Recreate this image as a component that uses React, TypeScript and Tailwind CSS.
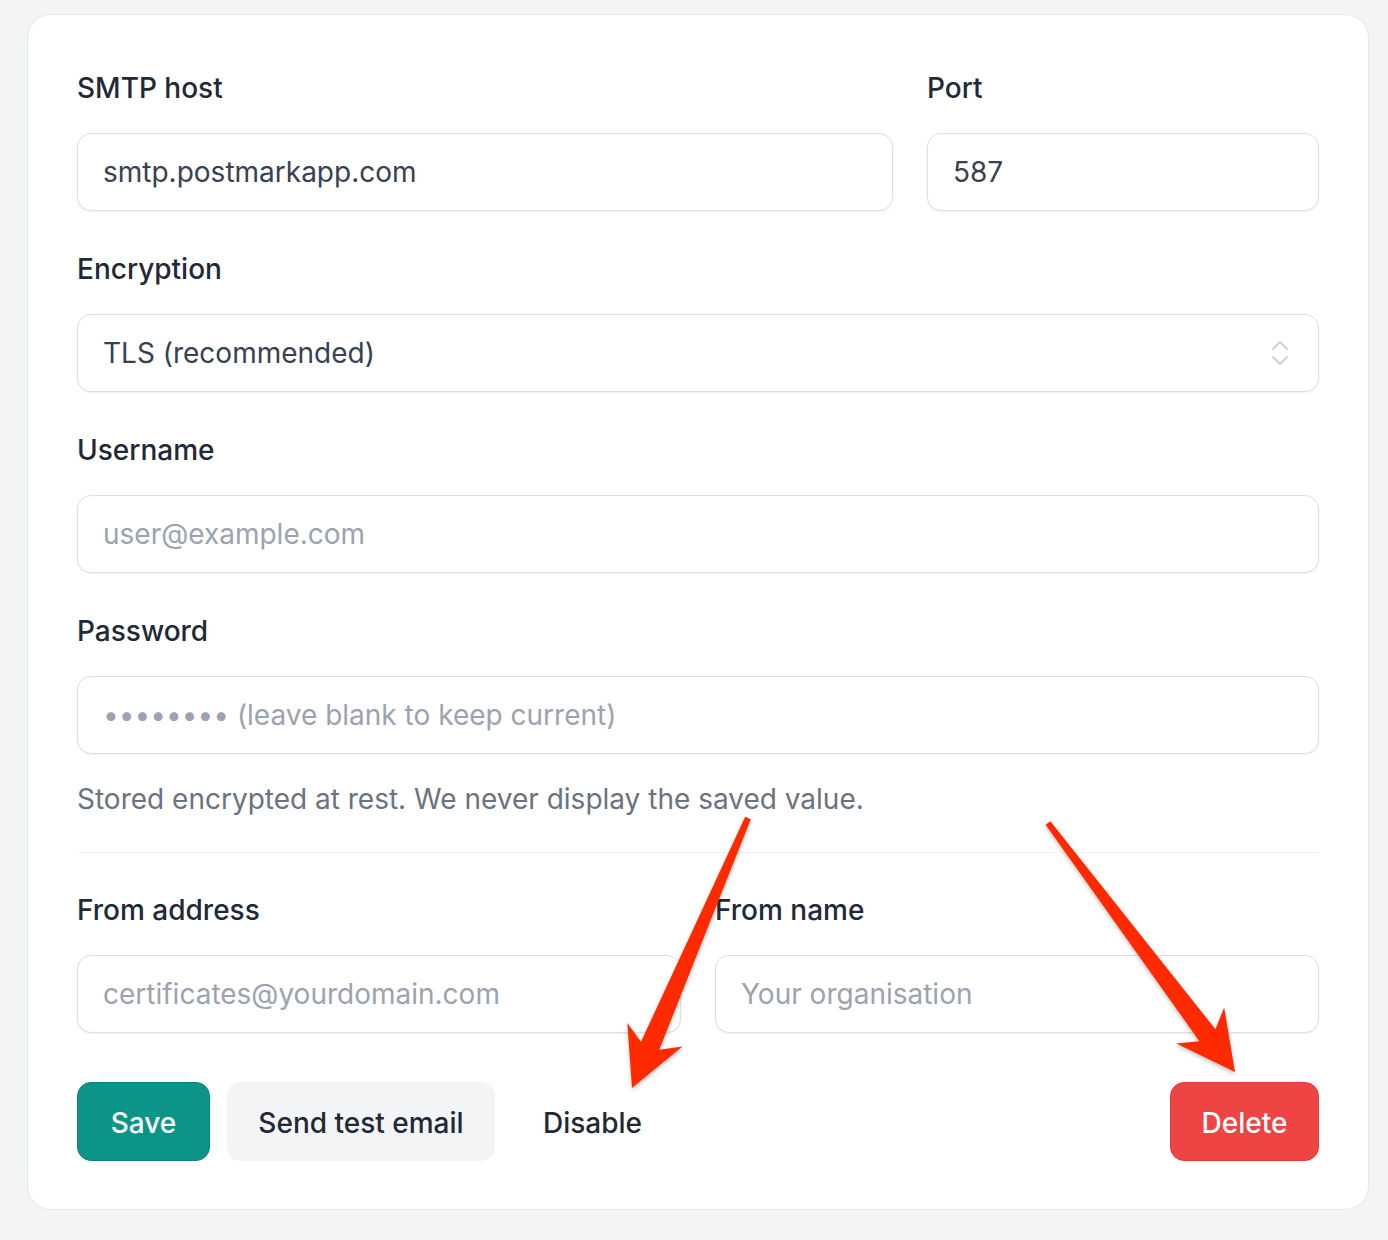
import React from 'react';

const font = { fontFamily: 'Inter, "Liberation Sans", sans-serif' };

type Pt = [number, number];

// builds a tapered arrow polygon from tail to tip
function arrowPoints(tail: Pt, tip: Pt): string {
  const dx = tip[0] - tail[0];
  const dy = tip[1] - tail[1];
  const len = Math.hypot(dx, dy);
  const d: Pt = [dx / len, dy / len];
  const n: Pt = [-d[1], d[0]];
  const at = (base: Pt, along: number, side: number): Pt => [
    base[0] + d[0] * along + n[0] * side,
    base[1] + d[1] * along + n[1] * side,
  ];
  const pts: Pt[] = [
    at(tail, 0, -3),
    at(tip, -46, -10),
    at(tip, -58, -30),
    tip,
    at(tip, -58, 30),
    at(tip, -46, 10),
    at(tail, 0, 3),
  ];
  return pts.map((p) => `${p[0].toFixed(1)},${p[1].toFixed(1)}`).join(' ');
}

const Label: React.FC<{ children: React.ReactNode }> = ({ children }) => (
  <label className="block h-10 leading-10 text-[28px] font-medium text-[#1f2937]">{children}</label>
);

const inputCls =
  'w-full h-[78px] rounded-[14px] border border-[#dcdee2] bg-white px-[25px] text-[28px] text-[#374151] shadow-[0_1px_2px_rgba(0,0,0,0.06)] outline-none placeholder:text-[#9ca3af]';

const Field: React.FC<{ label: string; children: React.ReactNode }> = ({ label, children }) => (
  <div>
    <Label>{label}</Label>
    <div className="mt-[25px]">{children}</div>
  </div>
);

export default function App() {
  return (
    <div className="relative min-h-[1240px] bg-[#f3f4f6] pt-[14px] pl-[27px] pr-[19px]" style={font}>
      <div className="w-[1342px] rounded-[24px] border border-[#e5e7eb] bg-white px-[49px] pt-[53px] pb-[48px]">
        <div className="flex flex-col gap-[38px]">
          <div className="grid grid-cols-[1fr_392px] gap-[34px]">
            <Field label="SMTP host">
              <input className={inputCls} defaultValue="smtp.postmarkapp.com" />
            </Field>
            <Field label="Port">
              <input className={inputCls} defaultValue="587" />
            </Field>
          </div>

          <Field label="Encryption">
            <div className={inputCls + ' flex items-center justify-between pr-[28px]'}>
              <span>TLS (recommended)</span>
              <svg width="20" height="30" viewBox="0 0 20 30" fill="none" stroke="#cfd2d7" strokeWidth="2" strokeLinecap="round" strokeLinejoin="round">
                <path d="M3 11 L10 4 L17 11" />
                <path d="M3 19 L10 26 L17 19" />
              </svg>
            </div>
          </Field>

          <Field label="Username">
            <input className={inputCls} placeholder="user@example.com" />
          </Field>

          <div>
            <Field label="Password">
              <input className={inputCls} placeholder="•••••••• (leave blank to keep current)" />
            </Field>
            <p className="mt-[25px] h-10 leading-10 text-[28px] text-[#6b7280]">
              Stored encrypted at rest. We never display the saved value.
            </p>
            <div className="mt-[33px] h-px bg-[#f0f1f3]" />
          </div>
        </div>

        <div className="mt-[37px] grid grid-cols-2 gap-[34px]">
          <Field label="From address">
            <input className={inputCls} placeholder="certificates@yourdomain.com" />
          </Field>
          <Field label="From name">
            <input className={inputCls} placeholder="Your organisation" />
          </Field>
        </div>

        <div className="mt-[49px] flex items-center">
          <button className="h-[79px] w-[133px] rounded-[14px] border border-[#0b8377] bg-[#0d9488] pt-[3px] text-[28px] font-medium text-white">
            Save
          </button>
          <button className="ml-[17px] h-[79px] w-[268px] rounded-[14px] bg-[#f3f4f6] pt-[3px] text-[28px] font-medium text-[#1f2937]">
            Send test email
          </button>
          <button className="ml-[22px] h-[79px] px-[26px] pt-[3px] text-[28px] font-medium text-[#1f2937]">Disable</button>
          <button className="ml-auto h-[79px] w-[149px] rounded-[14px] border border-[#e23b3b] bg-[#ef4444] pt-[3px] text-[28px] font-medium text-white">
            Delete
          </button>
        </div>
      </div>

      <svg className="pointer-events-none absolute left-0 top-0" width="1388" height="1240">
        <defs>
          <filter id="arrowShadow" x="-20%" y="-20%" width="140%" height="140%">
            <feDropShadow dx="0" dy="2" stdDeviation="2" floodColor="#000" floodOpacity="0.25" />
          </filter>
        </defs>
        <polygon points={arrowPoints([748, 818], [632, 1088])} fill="#ff2a00" filter="url(#arrowShadow)" strokeLinejoin="round" />
        <polygon points={arrowPoints([1048, 823], [1235, 1072])} fill="#ff2a00" filter="url(#arrowShadow)" strokeLinejoin="round" />
      </svg>
    </div>
  );
}
